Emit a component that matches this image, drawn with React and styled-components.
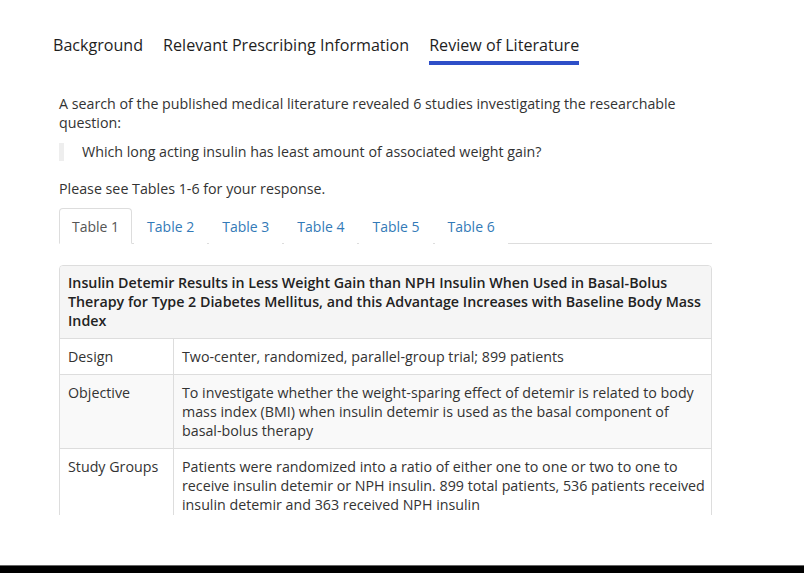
import React, { useState } from 'react';
import styled, { createGlobalStyle } from 'styled-components';

const GlobalStyle = createGlobalStyle`
  html, body {
    margin: 0;
    padding: 0;
    background: #fff;
  }
  body {
    font-family: "Open Sans", "Liberation Sans", sans-serif;
    color: #333;
  }
`;

const Screen = styled.div`
  height: 573px;
  display: flex;
  flex-direction: column;
  overflow: hidden;
`;

const Main = styled.div`
  flex: 1;
`;

const Scroller = styled.div`
  height: 515px;
  overflow: hidden;
`;

const Footer = styled.div`
  height: 7px;
  background: #000;
  border-top: 1px solid #666;
`;

const TopNav = styled.nav`
  display: flex;
  gap: 20px;
  padding: 33px 0 0 53px;
`;

const TopLink = styled.a`
  font-size: 16.1px;
  line-height: 24px;
  color: #1e1e1e;
  text-decoration: none;
  padding-bottom: 4px;
  border-bottom: 4px solid ${(p) => (p.$active ? '#2e4fc8' : 'transparent')};
  cursor: pointer;
`;

const Content = styled.div`
  width: 653px;
  padding: 29px 0 0 59px;
  font-size: 14.25px;
  line-height: 19px;
`;

const Para = styled.p`
  margin: 0;
`;

const Quote = styled.blockquote`
  margin: 11px 0 18px;
  padding: 0 0 0 18px;
  border-left: 5px solid #eee;
  line-height: 18px;
`;

const Tabs = styled.ul`
  display: flex;
  list-style: none;
  margin: 10px 0 0;
  padding: 0;
  border-bottom: 1px solid #ddd;
`;

const Tab = styled.li`
  margin-bottom: -1px;
  margin-right: 2px;
  padding: 8px 12px 7px;
  line-height: 19px;
  font-size: 14px;
  border: 1px solid ${(p) => (p.$active ? '#ddd' : 'transparent')};
  border-bottom-color: ${(p) => (p.$active ? '#fff' : 'transparent')};
  border-radius: 4px 4px 0 0;
  background: #fff;
  color: ${(p) => (p.$active ? '#555' : '#337ab7')};
  cursor: pointer;
`;

const Panel = styled.div`
  margin-top: 21px;
  border: 1px solid #ddd;
  border-radius: 4px;
  overflow: hidden;
`;

const PanelHead = styled.div`
  background: #f5f5f5;
  padding: 7px 8px 8px;
  font-weight: 600;
  color: #222;
  border-bottom: 1px solid #ddd;
`;

const Table = styled.table`
  width: 100%;
  border-collapse: collapse;
`;

const Row = styled.tr`
  background: ${(p) => (p.$striped ? '#f9f9f9' : '#fff')};
  border-top: 1px solid #ddd;
  &:first-child {
    border-top: none;
  }
`;

const Label = styled.td`
  width: 97px;
  padding: 8px;
  vertical-align: top;
  border-right: 1px solid #ddd;
`;

const Value = styled.td`
  padding: 8px 2px 8px 8px;
  vertical-align: top;
`;

const rows = [
  ['Design', 'Two-center, randomized, parallel-group trial; 899 patients'],
  [
    'Objective',
    'To investigate whether the weight-sparing effect of detemir is related to body mass index (BMI) when insulin detemir is used as the basal component of basal-bolus therapy',
  ],
  [
    'Study Groups',
    'Patients were randomized into a ratio of either one to one or two to one to receive insulin detemir or NPH insulin. 899 total patients, 536 patients received insulin detemir and 363 received NPH insulin',
  ],
];

export default function App() {
  const [tab, setTab] = useState(0);
  const navs = ['Background', 'Relevant Prescribing Information', 'Review of Literature'];

  return (
    <>
      <GlobalStyle />
      <Screen>
        <Main>
          <Scroller>
            <TopNav>
              {navs.map((n, i) => (
                <TopLink key={n} $active={i === 2}>
                  {n}
                </TopLink>
              ))}
            </TopNav>
            <Content>
              <Para>
                A search of the published medical literature revealed 6 studies investigating the researchable
                question:
              </Para>
              <Quote>Which long acting insulin has least amount of associated weight gain?</Quote>
              <Para>Please see Tables 1-6 for your response.</Para>
              <Tabs>
                {[1, 2, 3, 4, 5, 6].map((n, i) => (
                  <Tab key={n} $active={i === tab} onClick={() => setTab(i)}>
                    Table {n}
                  </Tab>
                ))}
              </Tabs>
              <Panel>
                <PanelHead>
                  Insulin Detemir Results in Less Weight Gain than NPH Insulin When Used in Basal-Bolus Therapy for
                  Type 2 Diabetes Mellitus, and this Advantage Increases with Baseline Body Mass Index
                </PanelHead>
                <Table>
                  <tbody>
                    {rows.map(([l, v], i) => (
                      <Row key={l} $striped={i % 2 === 1}>
                        <Label>{l}</Label>
                        <Value>{v}</Value>
                      </Row>
                    ))}
                  </tbody>
                </Table>
              </Panel>
            </Content>
          </Scroller>
        </Main>
        <Footer />
      </Screen>
    </>
  );
}
